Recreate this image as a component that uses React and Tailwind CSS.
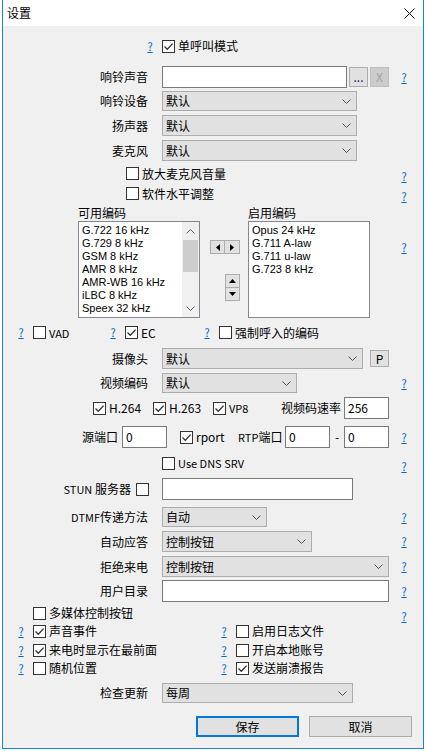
import React from 'react';

// 帮助链接 "?"
const Help = ({ className = '' }) => (
  <span className={`w-4 shrink-0 text-center text-[11px] leading-[11px] text-[#0066cc] underline ${className}`}>?</span>
);

const RightHelp = ({ className = '' }) => <Help className={`ml-auto mr-[11px] ${className}`} />;

const Check = ({ on }) => (
  <span className="w-[13px] h-[13px] shrink-0 border border-[#333333] bg-white flex items-center justify-center">
    {on && (
      <svg width="11" height="11" viewBox="0 0 11 11">
        <path d="M1.5 5.5 L4.3 8.3 L9.6 2.6" fill="none" stroke="#333333" strokeWidth="1.3" />
      </svg>
    )}
  </span>
);

const Chevron = () => (
  <svg width="9" height="5" viewBox="0 0 9 5" className="shrink-0">
    <path d="M0.5 0.5 L4.5 4.5 L8.5 0.5" fill="none" stroke="#505050" strokeWidth="1" />
  </svg>
);

const Select = ({ className, value }) => (
  <div className={`shrink-0 h-full border border-[#adadad] bg-[#e1e1e1] flex items-center pl-[3px] pr-[5px] ${className}`}>
    <span className="flex-1">{value}</span>
    <Chevron />
  </div>
);

const Input = ({ className, value = '' }) => (
  <div className={`shrink-0 h-full border border-[#7a7a7a] bg-white flex items-center pl-[3px] ${className}`}>{value}</div>
);

// 标签列 + 控件 + 右侧帮助
const Row = ({ label, children, help, className = '', helpClass = '' }) => (
  <div className={`flex items-center shrink-0 ${className}`}>
    <div className="w-[159px] pr-[14px] shrink-0 flex justify-end items-center whitespace-nowrap">{label}</div>
    {children}
    {help && <RightHelp className={helpClass} />}
  </div>
);

const Tri = ({ dir }) => {
  const d = {
    left: 'M4 0 L0 3.5 L4 7 Z',
    right: 'M0 0 L4 3.5 L0 7 Z',
  }[dir];
  return (
    <svg width="4" height="7" viewBox="0 0 4 7">
      <path d={d} fill="#000" />
    </svg>
  );
};

const TriV = ({ dir }) => (
  <svg width="7" height="4" viewBox="0 0 7 4">
    <path d={dir === 'up' ? 'M0 4 L3.5 0 L7 4 Z' : 'M0 0 L3.5 4 L7 0 Z'} fill="#000" />
  </svg>
);

const available = ['G.722 16 kHz', 'G.729 8 kHz', 'GSM 8 kHz', 'AMR 8 kHz', 'AMR-WB 16 kHz', 'iLBC 8 kHz', 'Speex 32 kHz'];
const enabled = ['Opus 24 kHz', 'G.711 A-law', 'G.711 u-law', 'G.723 8 kHz'];

// 列表项 (行高 13px)
const ListItem = ({ children }) => (
  <div className="h-[13px] leading-[13px] whitespace-nowrap font-['Liberation_Sans',sans-serif] text-[11px]">{children}</div>
);

const LeftCheck = ({ on, label, className = '', labelClass = '' }) => (
  <div className={`flex items-center shrink-0 ${className}`}>
    <Help />
    <span className="ml-[4px]"><Check on={on} /></span>
    <span className={`ml-[3px] whitespace-nowrap ${labelClass}`}>{label}</span>
  </div>
);

const Btn = ({ className = '', children }) => (
  <div className={`shrink-0 border border-[#adadad] bg-[#e1e1e1] flex items-center justify-center ${className}`}>{children}</div>
);

export default function App() {
  return (
    <div className="w-[426px] h-[751px] bg-white font-['Noto_Sans_CJK_SC','Noto_Sans',sans-serif] text-[12px] leading-[16px] text-black">
      <div className="ml-[2px] w-[422px] h-[749px] border-x border-b border-[#1883d7] bg-[#f0f0f0] flex flex-col">
        {/* 标题栏 */}
        <div className="h-[26px] shrink-0 bg-white flex items-center pl-[4px]">
          <span>设置</span>
          <svg width="11" height="11" viewBox="0 0 11 11" className="ml-auto mr-[8px]">
            <path d="M0.5 0.5 L10.5 10.5 M10.5 0.5 L0.5 10.5" stroke="#111" strokeWidth="1" />
          </svg>
        </div>

        <Row className="h-[16px] mt-[12px]" label={<Help className="mr-[-10px]" />}>
          <Check on />
          <span className="ml-[3px]">单呼叫模式</span>
        </Row>

        <Row className="h-[22px] mt-[12px]" label="响铃声音" help>
          <Input className="w-[185px]" />
          <Btn className="ml-[2px] w-[19px] h-[20px] text-[#202070]">...</Btn>
          <div className="ml-[2px] w-[19px] h-[20px] border border-[#bfbfbf] bg-[#cccccc] text-[#a0a0a0] flex items-center justify-center">X</div>
        </Row>

        <Row className="h-[20px] mt-[3px]" label="响铃设备">
          <Select className="w-[195px]" value="默认" />
        </Row>
        <Row className="h-[21px] mt-[4px]" label="扬声器">
          <Select className="w-[195px]" value="默认" />
        </Row>
        <Row className="h-[21px] mt-[4px]" label="麦克风">
          <Select className="w-[195px]" value="默认" />
        </Row>

        <div className="h-[17px] mt-[4px] flex items-center shrink-0">
          <span className="ml-[123px]"><Check /></span>
          <span className="ml-[3px]">放大麦克风音量</span>
          <RightHelp className="translate-y-[3px]" />
        </div>
        <div className="h-[17px] mt-[3px] flex items-center shrink-0">
          <span className="ml-[123px]"><Check /></span>
          <span className="ml-[3px]">软件水平调整</span>
          <RightHelp className="translate-y-[3px]" />
        </div>

        <div className="h-[15px] mt-[3px] flex items-center shrink-0">
          <span className="ml-[75px] w-[170px]">可用编码</span>
          <span>启用编码</span>
        </div>

        {/* 编码列表 */}
        <div className="h-[97px] mt-[1px] flex shrink-0">
          <div className="ml-[75px] w-[122px] h-full border border-[#828790] bg-white flex">
            <div className="flex-1 pl-[3px] pt-[2px] overflow-hidden">
              {available.map((c) => (
                <ListItem key={c}>{c}</ListItem>
              ))}
            </div>
            <div className="w-[17px] h-full bg-[#f0f0f0] flex flex-col items-center">
              <div className="h-[18px] flex items-center justify-center">
                <svg width="9" height="5" viewBox="0 0 9 5"><path d="M0.5 4.5 L4.5 0.5 L8.5 4.5" fill="none" stroke="#606060" /></svg>
              </div>
              <div className="w-[15px] h-[32px] bg-[#cdcdcd]" />
              <div className="flex-1" />
              <div className="h-[18px] flex items-center justify-center">
                <svg width="9" height="5" viewBox="0 0 9 5"><path d="M0.5 0.5 L4.5 4.5 L8.5 0.5" fill="none" stroke="#606060" /></svg>
              </div>
            </div>
          </div>

          <div className="ml-[10px] w-[30px] flex flex-col items-end">
            <div className="mt-[19px] h-[14px] w-[30px] flex">
              <Btn className="w-[15px] h-full"><Tri dir="left" /></Btn>
              <Btn className="w-[15px] h-full border-l-0"><Tri dir="right" /></Btn>
            </div>
            <Btn className="mt-[20px] w-[15px] h-[14px]"><TriV dir="up" /></Btn>
            <Btn className="w-[15px] h-[13px] border-t-0"><TriV dir="down" /></Btn>
          </div>

          <div className="ml-[8px] w-[122px] h-full border border-[#828790] bg-white pl-[3px] pt-[2px]">
            {enabled.map((c) => (
              <ListItem key={c}>{c}</ListItem>
            ))}
          </div>
          <RightHelp className="self-start mt-[21px]" />
        </div>

        {/* VAD / EC */}
        <div className="h-[17px] mt-[6px] flex items-center shrink-0 pl-[10px]">
          <LeftCheck className="w-[92px]" label="VAD" labelClass="text-[11px]" />
          <LeftCheck className="w-[94px]" on label="EC" />
          <LeftCheck label="强制呼入的编码" />
        </div>

        <Row className="h-[21px] mt-[7px]" label="摄像头">
          <Select className="w-[201px]" value="默认" />
          <Btn className="ml-[7px] w-[19px] h-[17px]">P</Btn>
        </Row>
        <Row className="h-[20px] mt-[4px]" label="视频编码" help>
          <Select className="w-[135px]" value="默认" />
        </Row>

        <div className="h-[22px] mt-[4px] flex items-center shrink-0 pl-[90px]">
          <div className="w-[60px] flex items-center"><Check on /><span className="ml-[3px]">H.264</span></div>
          <div className="w-[60px] flex items-center"><Check on /><span className="ml-[3px]">H.263</span></div>
          <div className="w-[68px] flex items-center"><Check on /><span className="ml-[3px] text-[11px]">VP8</span></div>
          <span className="whitespace-nowrap">视频码速率</span>
          <Input className="ml-[3px] w-[45px]" value="256" />
        </div>

        <div className="h-[22px] mt-[7px] flex items-center shrink-0">
          <div className="w-[119px] pr-[4px] text-right shrink-0">源端口</div>
          <Input className="w-[45px]" value="0" />
          <span className="ml-[13px]"><Check on /></span>
          <span className="ml-[3px] w-[42px]">rport</span>
          <span className="w-[44px] whitespace-nowrap"><span className="text-[11px]">RTP</span>端口</span>
          <Input className="ml-[3px] w-[45px]" value="0" />
          <span className="w-[14px] text-center">-</span>
          <Input className="w-[45px]" value="0" />
          <RightHelp />
        </div>

        <div className="h-[16px] mt-[7px] flex items-center shrink-0">
          <span className="ml-[159px]"><Check /></span>
          <span className="ml-[3px] text-[11px]">Use DNS SRV</span>
          <RightHelp className="translate-y-[3px]" />
        </div>

        <Row className="h-[22px] mt-[7px]" label={<><span><span className="text-[11px]">STUN</span> 服务器</span><span className="ml-[5px] mr-[-1px]"><Check /></span></>}>
          <Input className="w-[191px]" />
        </Row>

        <Row className="h-[20px] mt-[7px]" label={<span><span className="text-[11px]">DTMF</span>传递方法</span>} help>
          <Select className="w-[105px]" value="自动" />
        </Row>
        <Row className="h-[21px] mt-[4px]" label="自动应答" help>
          <Select className="w-[150px]" value="控制按钮" />
        </Row>
        <Row className="h-[21px] mt-[4px]" label="拒绝来电" help>
          <Select className="w-[227px]" value="控制按钮" />
        </Row>
        <Row className="h-[22px] mt-[3px]" label="用户目录" help>
          <Input className="w-[227px]" />
        </Row>

        <div className="h-[16px] mt-[3px] flex items-center shrink-0 pl-[30px]">
          <Check />
          <span className="ml-[3px]">多媒体控制按钮</span>
          <RightHelp className="translate-y-[3px]" />
        </div>
        <div className="h-[16px] mt-[2px] flex items-center shrink-0 pl-[10px]">
          <LeftCheck className="w-[203px]" on label="声音事件" />
          <LeftCheck label="启用日志文件" />
        </div>
        <div className="h-[16px] mt-[3px] flex items-center shrink-0 pl-[10px]">
          <LeftCheck className="w-[203px]" on label="来电时显示在最前面" />
          <LeftCheck label="开启本地账号" />
        </div>
        <div className="h-[16px] mt-[2px] flex items-center shrink-0 pl-[10px]">
          <LeftCheck className="w-[203px]" label="随机位置" />
          <LeftCheck on label="发送崩溃报告" />
        </div>

        <Row className="h-[20px] mt-[7px]" label="检查更新">
          <Select className="w-[191px]" value="每周" />
        </Row>

        <div className="h-[21px] mt-[13px] flex shrink-0 pl-[193px]">
          <div className="w-[103px] h-full border-2 border-[#0078d7] bg-[#e1e1e1] flex items-center justify-center">保存</div>
          <Btn className="ml-[10px] w-[103px] h-full">取消</Btn>
        </div>
      </div>
    </div>
  );
}
